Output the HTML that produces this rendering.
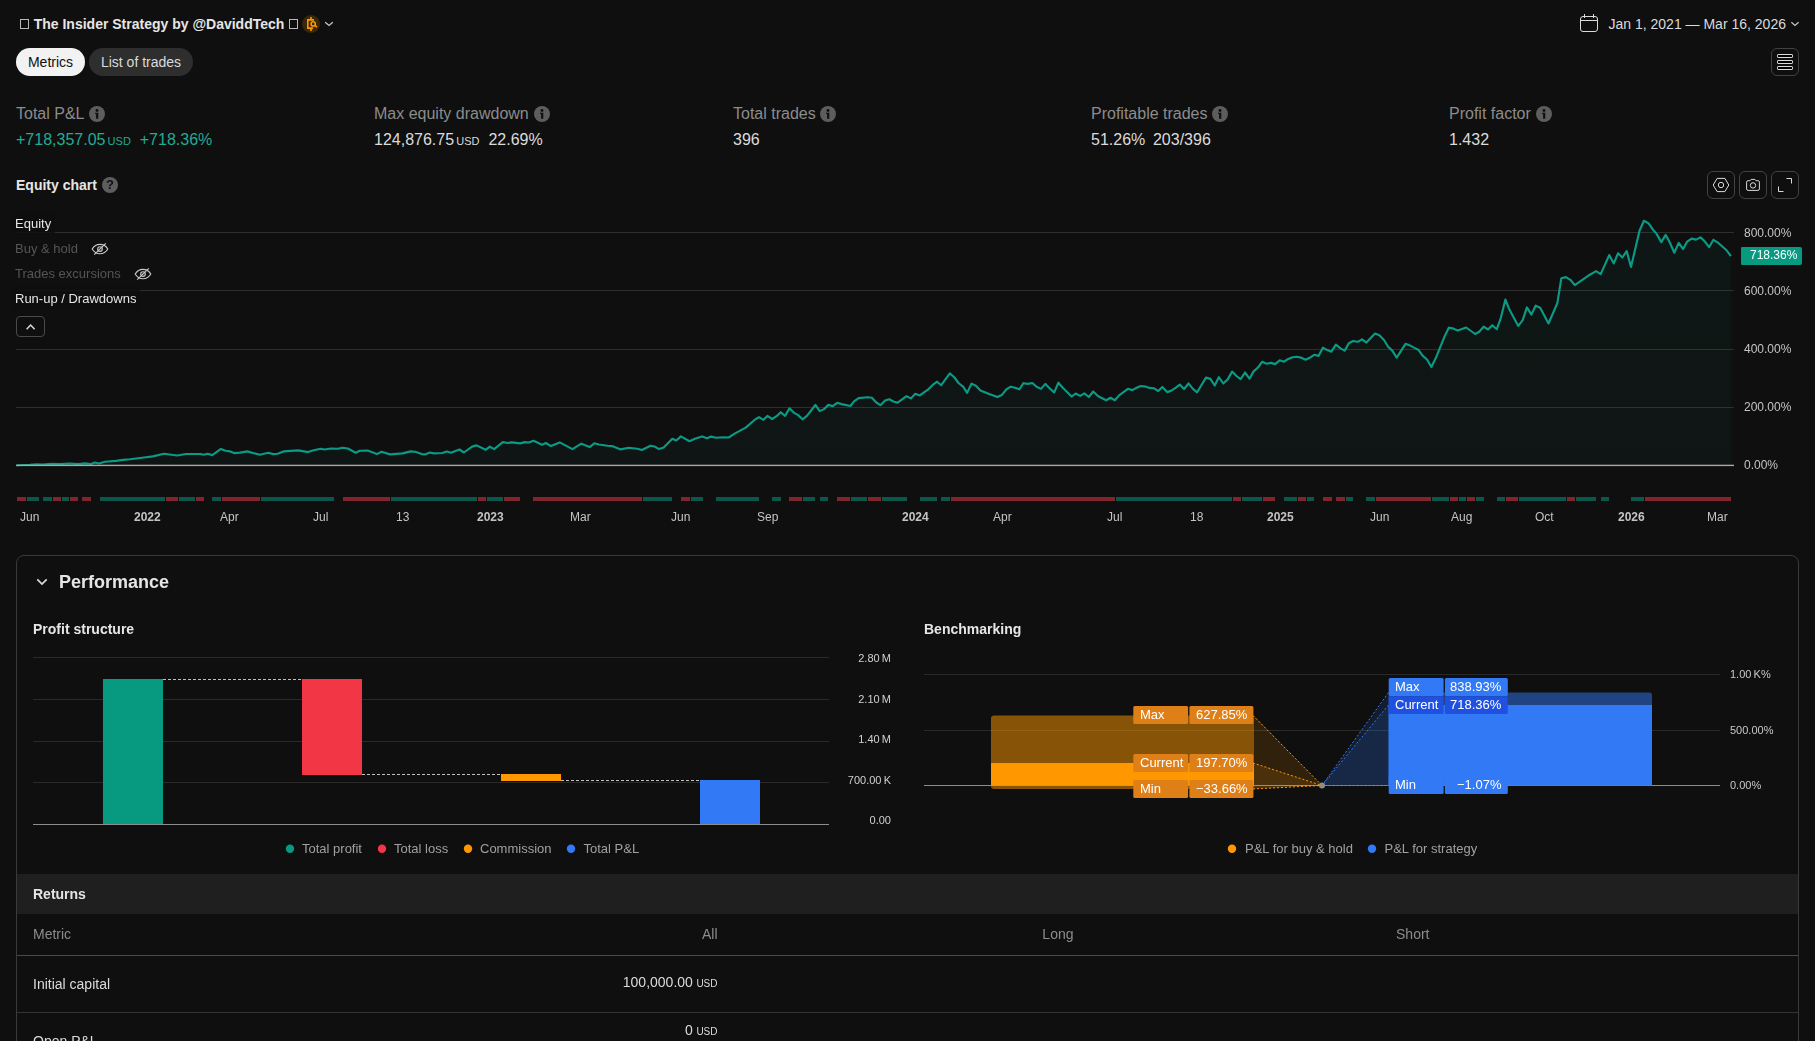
<!DOCTYPE html>
<html><head><meta charset="utf-8"><title>Strategy report</title>
<style>
html,body{margin:0;padding:0;background:#0f0f0f;}
body{width:1815px;height:1041px;overflow:hidden;position:relative;font-family:"Liberation Sans",sans-serif;color:#dbdbdb;}
.t{position:absolute;white-space:nowrap;}
.abs{position:absolute;}
.gs{will-change:transform;}
.tofu{display:inline-block;width:10.8px;height:10px;position:relative;vertical-align:baseline;}
.tofu i{position:absolute;left:1px;top:0px;width:6.6px;height:8px;border:1px solid #b8b8b8;display:block;}
.btn{position:absolute;width:26px;height:26px;border:1px solid #424242;border-radius:6px;}
.btn svg{position:absolute;left:-1px;top:-1px;}
.info{position:absolute;width:16px;height:16px;border-radius:50%;background:#5d5d5d;}
.usd{font-size:11px;}
svg{display:block;overflow:visible;}
</style></head><body>
<div class="t" style="top:17px;font-size:14px;line-height:14px;color:#e6e6e6;font-weight:700;left:19px;"><span class="tofu"><i></i></span> The Insider Strategy by @DaviddTech <span class="tofu"><i></i></span></div>
<svg class="abs" style="left:302px;top:15px" width="18" height="18" viewBox="0 0 18 18"><circle cx="9" cy="9" r="9" fill="#3a2806"/>
<g fill="none" stroke="#ff9800" stroke-width="1.6"><path d="M9 2v2.5M9 13.5V16"/><path d="M12 4.9H5.8v8.2H11"/><circle cx="11.2" cy="8.9" r="2.1"/><path d="M12.8 10.4l2.2 1.7"/></g></svg>
<svg class="abs" style="left:324px;top:20px" width="10" height="8" viewBox="0 0 10 8"><path d="M1.2 2.3L5 5.5 8.8 2.3" fill="none" stroke="#c8c8c8" stroke-width="1.3"/></svg>
<svg class="abs" style="left:1579px;top:13px" width="20" height="20" viewBox="0 0 20 20"><g fill="none" stroke="#dbdbdb" stroke-width="1"><rect x="1.5" y="3.5" width="17" height="15" rx="2.5"/><path d="M1.5 7.5h17M5.5 1v4M14.5 1v4"/></g></svg>
<div class="t" style="top:17px;font-size:14px;line-height:14px;color:#dbdbdb;left:1608.5px;">Jan 1, 2021 — Mar 16, 2026</div>
<svg class="abs" style="left:1790px;top:20px" width="10" height="8" viewBox="0 0 10 8"><path d="M1.4 2.3L5 5.4 8.6 2.3" fill="none" stroke="#c8c8c8" stroke-width="1.2"/></svg>
<div class="abs" style="left:16px;top:48px;width:69px;height:28px;border-radius:14px;background:#f2f2f2"></div>
<div class="t" style="top:55px;font-size:14px;line-height:14px;color:#0f0f0f;left:-99.5px;width:300px;text-align:center;">Metrics</div>
<div class="abs" style="left:89px;top:48px;width:104px;height:28px;border-radius:14px;background:#2e2e2e"></div>
<div class="t" style="top:55px;font-size:14px;line-height:14px;color:#dbdbdb;left:-9px;width:300px;text-align:center;">List of trades</div>
<div class="btn" style="left:1771px;top:48px"><svg width="28" height="28" viewBox="0 0 28 28"><g fill="#000" stroke="#dbdbdb" stroke-width="1"><rect x="6.5" y="6.5" width="15" height="3" rx="0.6"/><rect x="6.5" y="12.5" width="15" height="3" rx="0.6"/><rect x="6.5" y="18.5" width="15" height="3" rx="0.6"/></g></svg></div>
<div class="t" style="top:106px;font-size:16px;line-height:16px;color:#8c8c8c;left:16px;">Total P&amp;L</div>
<div class="t" style="top:106px;font-size:16px;line-height:16px;color:#8c8c8c;left:374px;">Max equity drawdown</div>
<div class="t" style="top:106px;font-size:16px;line-height:16px;color:#8c8c8c;left:733px;">Total trades</div>
<div class="t" style="top:106px;font-size:16px;line-height:16px;color:#8c8c8c;left:1091px;">Profitable trades</div>
<div class="t" style="top:106px;font-size:16px;line-height:16px;color:#8c8c8c;left:1449px;">Profit factor</div>
<div class="info" style="left:89px;top:106px"></div>
<svg class="abs" style="left:89px;top:106px" width="16" height="16" viewBox="0 0 16 16"><g fill="#0f0f0f"><circle cx="8" cy="4.5" r="1.45"/><path d="M6.1 6.8h3.2v5.9H7.1V8.1H6.1z"/></g></svg>
<div class="info" style="left:534px;top:106px"></div>
<svg class="abs" style="left:534px;top:106px" width="16" height="16" viewBox="0 0 16 16"><g fill="#0f0f0f"><circle cx="8" cy="4.5" r="1.45"/><path d="M6.1 6.8h3.2v5.9H7.1V8.1H6.1z"/></g></svg>
<div class="info" style="left:820px;top:106px"></div>
<svg class="abs" style="left:820px;top:106px" width="16" height="16" viewBox="0 0 16 16"><g fill="#0f0f0f"><circle cx="8" cy="4.5" r="1.45"/><path d="M6.1 6.8h3.2v5.9H7.1V8.1H6.1z"/></g></svg>
<div class="info" style="left:1212px;top:106px"></div>
<svg class="abs" style="left:1212px;top:106px" width="16" height="16" viewBox="0 0 16 16"><g fill="#0f0f0f"><circle cx="8" cy="4.5" r="1.45"/><path d="M6.1 6.8h3.2v5.9H7.1V8.1H6.1z"/></g></svg>
<div class="info" style="left:1536px;top:106px"></div>
<svg class="abs" style="left:1536px;top:106px" width="16" height="16" viewBox="0 0 16 16"><g fill="#0f0f0f"><circle cx="8" cy="4.5" r="1.45"/><path d="M6.1 6.8h3.2v5.9H7.1V8.1H6.1z"/></g></svg>
<div class="t" style="top:132px;font-size:16px;line-height:16px;color:#22ab94;left:16px;">+718,357.05<span class="usd">&#8201;USD</span>&nbsp;&nbsp;+718.36%</div>
<div class="t" style="top:132px;font-size:16px;line-height:16px;color:#dbdbdb;left:374px;">124,876.75<span class="usd">&#8201;USD</span>&nbsp;&nbsp;22.69%</div>
<div class="t" style="top:132px;font-size:16px;line-height:16px;color:#dbdbdb;left:733px;">396</div>
<div class="t" style="top:132px;font-size:16px;line-height:16px;color:#dbdbdb;left:1091px;">51.26%<span style="margin-left:7.7px">203/396</span></div>
<div class="t" style="top:132px;font-size:16px;line-height:16px;color:#dbdbdb;left:1449px;">1.432</div>
<div class="t" style="top:178px;font-size:14px;line-height:14px;color:#e6e6e6;font-weight:700;left:16px;">Equity chart</div>
<div class="info" style="left:102px;top:177px"></div>
<div class="t gs" style="left:102px;top:177px;width:16px;height:16px;text-align:center;font-size:13px;line-height:16px;font-weight:700;color:#0f0f0f">?</div>
<div class="btn" style="left:1707px;top:171px"><svg width="28" height="28" viewBox="0 0 28 28"><g fill="none" stroke="#dbdbdb" stroke-width="1"><path d="M6.2 14l3.9-6.6h7.8l3.9 6.6-3.9 6.6h-7.8z"/><circle cx="14" cy="14" r="2.7"/></g></svg></div>
<div class="btn" style="left:1739px;top:171px"><svg width="28" height="28" viewBox="0 0 28 28"><g fill="none" stroke="#dbdbdb" stroke-width="1"><path d="M9.1 9.7h2l1-1.3h3.8l1 1.3h2a1.5 1.5 0 0 1 1.5 1.5v6.7a1.5 1.5 0 0 1-1.5 1.5H9.1a1.5 1.5 0 0 1-1.5-1.5v-6.7a1.5 1.5 0 0 1 1.5-1.5z"/><circle cx="14" cy="14.4" r="2.7"/></g></svg></div>
<div class="btn" style="left:1771px;top:171px"><svg width="28" height="28" viewBox="0 0 28 28"><g fill="none" stroke="#dbdbdb" stroke-width="1"><path d="M15.5 7.5h5v5M7.5 15.5v5h5"/></g></svg></div>
<svg class="abs" style="left:0;top:0" width="1815" height="560" viewBox="0 0 1815 560"><defs><linearGradient id="eg" x1="0" y1="0" x2="0" y2="1"><stop offset="0" stop-color="#089981" stop-opacity="0.06"/><stop offset="1" stop-color="#089981" stop-opacity="0.045"/></linearGradient></defs><rect x="16" y="232" width="1718" height="1" fill="#2e2e2e"/><rect x="16" y="290" width="1718" height="1" fill="#2e2e2e"/><rect x="16" y="349" width="1718" height="1" fill="#2e2e2e"/><rect x="16" y="407" width="1718" height="1" fill="#2e2e2e"/><path d="M16.6 465.3 L30.0 464.8 L36.4 464.3 L43.0 464.5 L51.6 463.7 L60.0 464.1 L69.5 463.5 L78.0 464.1 L85.0 463.4 L91.0 464.0 L95.0 462.5 L99.0 463.5 L105.0 461.8 L116.0 460.9 L123.0 459.9 L130.0 459.3 L142.2 457.8 L152.8 456.4 L164.0 453.8 L177.3 455.5 L185.9 454.0 L200.4 454.0 L203.7 454.7 L207.7 453.8 L212.3 455.1 L220.9 448.9 L225.5 450.8 L230.2 451.4 L234.1 453.1 L240.0 452.6 L247.3 451.4 L259.8 454.8 L268.4 452.8 L273.0 454.1 L277.7 453.7 L283.6 451.4 L298.2 450.4 L308.1 452.1 L312.7 450.5 L320.7 448.8 L324.6 449.5 L331.2 448.5 L337.9 448.8 L342.5 447.7 L347.8 448.5 L355.7 452.8 L359.7 450.8 L367.6 450.5 L376.9 454.1 L381.5 451.8 L390.1 454.4 L402.6 453.4 L410.6 451.4 L415.2 451.8 L421.8 454.1 L425.1 454.4 L429.8 452.5 L433.7 453.4 L442.3 453.0 L446.9 451.4 L450.9 452.8 L459.5 449.5 L463.9 452.5 L472.1 446.6 L476.6 445.4 L485.6 449.8 L489.8 446.7 L494.2 449.1 L502.8 442.1 L507.7 443.0 L511.7 442.4 L520.2 443.4 L524.9 442.1 L528.8 442.5 L533.5 440.8 L542.1 444.8 L546.0 443.0 L550.9 446.1 L559.7 442.4 L572.5 449.1 L581.3 443.7 L589.7 447.1 L594.3 443.3 L598.9 444.5 L607.5 445.8 L612.1 446.1 L620.7 449.4 L628.7 447.8 L637.3 448.7 L641.9 450.0 L650.5 445.7 L654.5 446.5 L659.1 449.1 L663.7 447.4 L672.3 438.8 L676.3 440.5 L680.9 436.4 L689.5 441.2 L694.8 438.8 L702.1 436.4 L707.2 438.3 L711.0 436.6 L716.0 437.7 L723.1 437.2 L728.7 437.5 L734.2 433.9 L745.7 427.6 L755.1 419.5 L759.0 417.1 L763.4 419.8 L767.4 415.9 L772.2 419.0 L776.6 416.2 L780.7 412.2 L785.1 415.9 L789.5 408.3 L793.7 412.6 L798.1 415.1 L802.5 419.3 L806.9 415.9 L815.4 405.0 L819.8 411.1 L824.0 409.1 L828.4 404.9 L832.8 406.1 L837.2 402.8 L841.6 404.1 L850.4 406.0 L854.3 401.1 L858.7 398.1 L867.5 397.2 L871.9 397.8 L876.3 402.5 L880.4 405.2 L885.1 400.5 L889.3 399.2 L893.9 401.8 L897.7 402.6 L906.5 396.2 L910.9 398.4 L915.3 393.8 L919.8 395.4 L928.6 389.1 L933.0 384.7 L937.1 381.7 L941.2 385.2 L949.8 373.4 L954.5 377.5 L958.5 383.0 L963.3 386.9 L967.1 392.9 L971.5 383.6 L975.9 385.8 L980.4 390.5 L989.2 394.0 L997.4 397.1 L1001.8 395.1 L1006.3 389.4 L1010.7 386.7 L1015.1 387.8 L1019.5 389.3 L1023.3 383.2 L1027.7 383.9 L1032.4 383.0 L1036.6 386.7 L1041.0 388.9 L1045.4 383.9 L1049.8 388.5 L1054.2 392.4 L1058.4 382.7 L1063.0 388.0 L1071.6 396.6 L1075.7 393.5 L1080.1 395.9 L1084.4 393.4 L1088.8 397.0 L1093.2 391.5 L1098.2 396.2 L1106.2 400.3 L1110.5 397.8 L1114.9 400.3 L1119.1 395.4 L1127.9 388.8 L1132.3 390.1 L1136.7 387.7 L1140.6 386.0 L1145.6 386.6 L1149.4 387.9 L1153.8 388.2 L1158.2 391.0 L1162.4 387.0 L1167.1 392.1 L1170.9 390.9 L1175.9 387.7 L1179.7 384.6 L1184.1 389.0 L1188.5 383.3 L1192.9 388.8 L1197.1 392.3 L1206.0 377.6 L1210.4 378.9 L1214.7 385.5 L1218.8 377.2 L1223.3 383.5 L1227.7 379.4 L1232.1 371.6 L1236.5 376.0 L1240.6 379.1 L1245.0 372.5 L1249.5 378.7 L1253.6 371.4 L1258.0 367.5 L1262.1 361.8 L1266.6 363.7 L1271.2 362.9 L1275.2 364.1 L1279.7 360.3 L1284.1 361.7 L1288.2 358.9 L1292.6 357.3 L1297.0 356.7 L1300.9 357.6 L1305.5 359.7 L1309.7 357.8 L1314.1 354.8 L1318.5 355.9 L1322.9 347.7 L1327.3 350.1 L1331.4 351.7 L1335.9 344.6 L1340.5 348.4 L1344.7 350.6 L1348.8 343.3 L1353.2 341.0 L1357.8 341.8 L1362.0 339.3 L1366.4 342.6 L1375.0 333.6 L1379.4 335.2 L1384.0 340.0 L1388.1 346.8 L1392.3 350.6 L1396.7 357.6 L1405.5 343.8 L1409.9 345.4 L1414.4 347.9 L1418.4 349.8 L1422.6 355.6 L1427.0 359.5 L1431.4 367.0 L1435.8 358.1 L1444.4 336.9 L1448.8 327.7 L1452.9 328.4 L1457.7 330.6 L1466.2 327.5 L1475.1 334.0 L1479.2 331.8 L1483.7 326.7 L1488.0 329.5 L1492.3 325.2 L1496.8 329.2 L1500.8 318.1 L1505.4 299.5 L1509.4 309.6 L1518.3 325.9 L1522.7 320.2 L1526.9 307.4 L1531.4 314.6 L1535.6 305.7 L1540.2 307.8 L1548.5 323.5 L1557.3 303.3 L1561.3 278.3 L1565.9 277.1 L1570.4 279.8 L1574.8 285.1 L1588.1 275.8 L1596.1 271.1 L1600.7 274.1 L1609.2 255.1 L1613.8 263.4 L1618.0 253.3 L1622.3 257.5 L1626.7 251.1 L1631.0 267.0 L1639.5 230.8 L1643.9 220.8 L1648.6 223.4 L1652.6 229.2 L1656.6 233.9 L1661.3 242.1 L1665.7 234.9 L1669.7 242.3 L1674.3 252.7 L1678.7 242.9 L1683.1 249.0 L1687.2 241.6 L1691.6 238.6 L1696.0 239.6 L1700.5 237.4 L1704.7 241.3 L1709.1 247.2 L1713.4 239.8 L1717.5 242.3 L1726.6 250.3 L1730.9 256.1 L1731 465 L16 465 Z" fill="url(#eg)"/><path d="M16.6 465.3 L30.0 464.8 L36.4 464.3 L43.0 464.5 L51.6 463.7 L60.0 464.1 L69.5 463.5 L78.0 464.1 L85.0 463.4 L91.0 464.0 L95.0 462.5 L99.0 463.5 L105.0 461.8 L116.0 460.9 L123.0 459.9 L130.0 459.3 L142.2 457.8 L152.8 456.4 L164.0 453.8 L177.3 455.5 L185.9 454.0 L200.4 454.0 L203.7 454.7 L207.7 453.8 L212.3 455.1 L220.9 448.9 L225.5 450.8 L230.2 451.4 L234.1 453.1 L240.0 452.6 L247.3 451.4 L259.8 454.8 L268.4 452.8 L273.0 454.1 L277.7 453.7 L283.6 451.4 L298.2 450.4 L308.1 452.1 L312.7 450.5 L320.7 448.8 L324.6 449.5 L331.2 448.5 L337.9 448.8 L342.5 447.7 L347.8 448.5 L355.7 452.8 L359.7 450.8 L367.6 450.5 L376.9 454.1 L381.5 451.8 L390.1 454.4 L402.6 453.4 L410.6 451.4 L415.2 451.8 L421.8 454.1 L425.1 454.4 L429.8 452.5 L433.7 453.4 L442.3 453.0 L446.9 451.4 L450.9 452.8 L459.5 449.5 L463.9 452.5 L472.1 446.6 L476.6 445.4 L485.6 449.8 L489.8 446.7 L494.2 449.1 L502.8 442.1 L507.7 443.0 L511.7 442.4 L520.2 443.4 L524.9 442.1 L528.8 442.5 L533.5 440.8 L542.1 444.8 L546.0 443.0 L550.9 446.1 L559.7 442.4 L572.5 449.1 L581.3 443.7 L589.7 447.1 L594.3 443.3 L598.9 444.5 L607.5 445.8 L612.1 446.1 L620.7 449.4 L628.7 447.8 L637.3 448.7 L641.9 450.0 L650.5 445.7 L654.5 446.5 L659.1 449.1 L663.7 447.4 L672.3 438.8 L676.3 440.5 L680.9 436.4 L689.5 441.2 L694.8 438.8 L702.1 436.4 L707.2 438.3 L711.0 436.6 L716.0 437.7 L723.1 437.2 L728.7 437.5 L734.2 433.9 L745.7 427.6 L755.1 419.5 L759.0 417.1 L763.4 419.8 L767.4 415.9 L772.2 419.0 L776.6 416.2 L780.7 412.2 L785.1 415.9 L789.5 408.3 L793.7 412.6 L798.1 415.1 L802.5 419.3 L806.9 415.9 L815.4 405.0 L819.8 411.1 L824.0 409.1 L828.4 404.9 L832.8 406.1 L837.2 402.8 L841.6 404.1 L850.4 406.0 L854.3 401.1 L858.7 398.1 L867.5 397.2 L871.9 397.8 L876.3 402.5 L880.4 405.2 L885.1 400.5 L889.3 399.2 L893.9 401.8 L897.7 402.6 L906.5 396.2 L910.9 398.4 L915.3 393.8 L919.8 395.4 L928.6 389.1 L933.0 384.7 L937.1 381.7 L941.2 385.2 L949.8 373.4 L954.5 377.5 L958.5 383.0 L963.3 386.9 L967.1 392.9 L971.5 383.6 L975.9 385.8 L980.4 390.5 L989.2 394.0 L997.4 397.1 L1001.8 395.1 L1006.3 389.4 L1010.7 386.7 L1015.1 387.8 L1019.5 389.3 L1023.3 383.2 L1027.7 383.9 L1032.4 383.0 L1036.6 386.7 L1041.0 388.9 L1045.4 383.9 L1049.8 388.5 L1054.2 392.4 L1058.4 382.7 L1063.0 388.0 L1071.6 396.6 L1075.7 393.5 L1080.1 395.9 L1084.4 393.4 L1088.8 397.0 L1093.2 391.5 L1098.2 396.2 L1106.2 400.3 L1110.5 397.8 L1114.9 400.3 L1119.1 395.4 L1127.9 388.8 L1132.3 390.1 L1136.7 387.7 L1140.6 386.0 L1145.6 386.6 L1149.4 387.9 L1153.8 388.2 L1158.2 391.0 L1162.4 387.0 L1167.1 392.1 L1170.9 390.9 L1175.9 387.7 L1179.7 384.6 L1184.1 389.0 L1188.5 383.3 L1192.9 388.8 L1197.1 392.3 L1206.0 377.6 L1210.4 378.9 L1214.7 385.5 L1218.8 377.2 L1223.3 383.5 L1227.7 379.4 L1232.1 371.6 L1236.5 376.0 L1240.6 379.1 L1245.0 372.5 L1249.5 378.7 L1253.6 371.4 L1258.0 367.5 L1262.1 361.8 L1266.6 363.7 L1271.2 362.9 L1275.2 364.1 L1279.7 360.3 L1284.1 361.7 L1288.2 358.9 L1292.6 357.3 L1297.0 356.7 L1300.9 357.6 L1305.5 359.7 L1309.7 357.8 L1314.1 354.8 L1318.5 355.9 L1322.9 347.7 L1327.3 350.1 L1331.4 351.7 L1335.9 344.6 L1340.5 348.4 L1344.7 350.6 L1348.8 343.3 L1353.2 341.0 L1357.8 341.8 L1362.0 339.3 L1366.4 342.6 L1375.0 333.6 L1379.4 335.2 L1384.0 340.0 L1388.1 346.8 L1392.3 350.6 L1396.7 357.6 L1405.5 343.8 L1409.9 345.4 L1414.4 347.9 L1418.4 349.8 L1422.6 355.6 L1427.0 359.5 L1431.4 367.0 L1435.8 358.1 L1444.4 336.9 L1448.8 327.7 L1452.9 328.4 L1457.7 330.6 L1466.2 327.5 L1475.1 334.0 L1479.2 331.8 L1483.7 326.7 L1488.0 329.5 L1492.3 325.2 L1496.8 329.2 L1500.8 318.1 L1505.4 299.5 L1509.4 309.6 L1518.3 325.9 L1522.7 320.2 L1526.9 307.4 L1531.4 314.6 L1535.6 305.7 L1540.2 307.8 L1548.5 323.5 L1557.3 303.3 L1561.3 278.3 L1565.9 277.1 L1570.4 279.8 L1574.8 285.1 L1588.1 275.8 L1596.1 271.1 L1600.7 274.1 L1609.2 255.1 L1613.8 263.4 L1618.0 253.3 L1622.3 257.5 L1626.7 251.1 L1631.0 267.0 L1639.5 230.8 L1643.9 220.8 L1648.6 223.4 L1652.6 229.2 L1656.6 233.9 L1661.3 242.1 L1665.7 234.9 L1669.7 242.3 L1674.3 252.7 L1678.7 242.9 L1683.1 249.0 L1687.2 241.6 L1691.6 238.6 L1696.0 239.6 L1700.5 237.4 L1704.7 241.3 L1709.1 247.2 L1713.4 239.8 L1717.5 242.3 L1726.6 250.3 L1730.9 256.1" fill="none" stroke="#0b9a84" stroke-width="2.15" stroke-linejoin="round" stroke-linecap="butt"/><rect x="16" y="464.7" width="1718" height="1.4" fill="#a8a8a8"/><rect x="17" y="497" width="9" height="4" fill="#83232c"/><rect x="27" y="497" width="12" height="4" fill="#0c574b"/><rect x="43" y="497" width="9" height="4" fill="#0c574b"/><rect x="53" y="497" width="8" height="4" fill="#83232c"/><rect x="62" y="497" width="7" height="4" fill="#0c574b"/><rect x="70" y="497" width="8" height="4" fill="#83232c"/><rect x="82" y="497" width="9" height="4" fill="#83232c"/><rect x="100" y="497" width="65" height="4" fill="#0c574b"/><rect x="166" y="497" width="12" height="4" fill="#83232c"/><rect x="179" y="497" width="16" height="4" fill="#0c574b"/><rect x="196" y="497" width="8" height="4" fill="#83232c"/><rect x="212" y="497" width="9" height="4" fill="#0c574b"/><rect x="222" y="497" width="38" height="4" fill="#83232c"/><rect x="261" y="497" width="73" height="4" fill="#0c574b"/><rect x="343" y="497" width="47" height="4" fill="#83232c"/><rect x="391" y="497" width="86" height="4" fill="#0c574b"/><rect x="478" y="497" width="8" height="4" fill="#83232c"/><rect x="487" y="497" width="16" height="4" fill="#0c574b"/><rect x="504" y="497" width="16" height="4" fill="#83232c"/><rect x="533" y="497" width="109" height="4" fill="#83232c"/><rect x="643" y="497" width="29" height="4" fill="#0c574b"/><rect x="681" y="497" width="9" height="4" fill="#83232c"/><rect x="691" y="497" width="12" height="4" fill="#0c574b"/><rect x="716" y="497" width="43" height="4" fill="#0c574b"/><rect x="772" y="497" width="9" height="4" fill="#0c574b"/><rect x="789" y="497" width="13" height="4" fill="#83232c"/><rect x="803" y="497" width="12" height="4" fill="#0c574b"/><rect x="820" y="497" width="8" height="4" fill="#0c574b"/><rect x="837" y="497" width="13" height="4" fill="#83232c"/><rect x="851" y="497" width="16" height="4" fill="#0c574b"/><rect x="868" y="497" width="13" height="4" fill="#83232c"/><rect x="882" y="497" width="25" height="4" fill="#0c574b"/><rect x="920" y="497" width="17" height="4" fill="#0c574b"/><rect x="941" y="497" width="9" height="4" fill="#0c574b"/><rect x="951" y="497" width="164" height="4" fill="#83232c"/><rect x="1116" y="497" width="116" height="4" fill="#0c574b"/><rect x="1233" y="497" width="8" height="4" fill="#83232c"/><rect x="1242" y="497" width="20" height="4" fill="#0c574b"/><rect x="1263" y="497" width="12" height="4" fill="#83232c"/><rect x="1284" y="497" width="13" height="4" fill="#0c574b"/><rect x="1298" y="497" width="8" height="4" fill="#83232c"/><rect x="1307" y="497" width="7" height="4" fill="#0c574b"/><rect x="1323" y="497" width="9" height="4" fill="#83232c"/><rect x="1336" y="497" width="9" height="4" fill="#83232c"/><rect x="1346" y="497" width="7" height="4" fill="#0c574b"/><rect x="1366" y="497" width="9" height="4" fill="#0c574b"/><rect x="1376" y="497" width="55" height="4" fill="#83232c"/><rect x="1432" y="497" width="17" height="4" fill="#0c574b"/><rect x="1450" y="497" width="8" height="4" fill="#83232c"/><rect x="1459" y="497" width="7" height="4" fill="#0c574b"/><rect x="1467" y="497" width="8" height="4" fill="#83232c"/><rect x="1476" y="497" width="8" height="4" fill="#0c574b"/><rect x="1497" y="497" width="8" height="4" fill="#0c574b"/><rect x="1506" y="497" width="12" height="4" fill="#83232c"/><rect x="1519" y="497" width="47" height="4" fill="#0c574b"/><rect x="1567" y="497" width="8" height="4" fill="#83232c"/><rect x="1576" y="497" width="20" height="4" fill="#0c574b"/><rect x="1601" y="497" width="8" height="4" fill="#0c574b"/><rect x="1631" y="497" width="13" height="4" fill="#0c574b"/><rect x="1645" y="497" width="86" height="4" fill="#83232c"/></svg>
<div class="t gs" style="top:227px;font-size:12px;line-height:12px;color:#c4c4c4;left:1744px;">800.00%</div>
<div class="t gs" style="top:285px;font-size:12px;line-height:12px;color:#c4c4c4;left:1744px;">600.00%</div>
<div class="t gs" style="top:343px;font-size:12px;line-height:12px;color:#c4c4c4;left:1744px;">400.00%</div>
<div class="t gs" style="top:401px;font-size:12px;line-height:12px;color:#c4c4c4;left:1744px;">200.00%</div>
<div class="t gs" style="top:459px;font-size:12px;line-height:12px;color:#c4c4c4;left:1744px;">0.00%</div>
<div class="abs" style="left:1741px;top:247px;width:61px;height:18px;border-radius:1px 2px 2px 1px;background:#089981"></div>
<div class="t gs" style="top:249px;font-size:12px;line-height:12px;color:#ffffff;left:1750px;">718.36%</div>
<div class="t gs" style="top:511px;font-size:12px;line-height:12px;color:#c4c4c4;left:20px;">Jun</div>
<div class="t gs" style="top:511px;font-size:12px;line-height:12px;color:#c4c4c4;font-weight:700;left:134px;">2022</div>
<div class="t gs" style="top:511px;font-size:12px;line-height:12px;color:#c4c4c4;left:220px;">Apr</div>
<div class="t gs" style="top:511px;font-size:12px;line-height:12px;color:#c4c4c4;left:313px;">Jul</div>
<div class="t gs" style="top:511px;font-size:12px;line-height:12px;color:#c4c4c4;left:396px;">13</div>
<div class="t gs" style="top:511px;font-size:12px;line-height:12px;color:#c4c4c4;font-weight:700;left:477px;">2023</div>
<div class="t gs" style="top:511px;font-size:12px;line-height:12px;color:#c4c4c4;left:570px;">Mar</div>
<div class="t gs" style="top:511px;font-size:12px;line-height:12px;color:#c4c4c4;left:671px;">Jun</div>
<div class="t gs" style="top:511px;font-size:12px;line-height:12px;color:#c4c4c4;left:757px;">Sep</div>
<div class="t gs" style="top:511px;font-size:12px;line-height:12px;color:#c4c4c4;font-weight:700;left:902px;">2024</div>
<div class="t gs" style="top:511px;font-size:12px;line-height:12px;color:#c4c4c4;left:993px;">Apr</div>
<div class="t gs" style="top:511px;font-size:12px;line-height:12px;color:#c4c4c4;left:1107px;">Jul</div>
<div class="t gs" style="top:511px;font-size:12px;line-height:12px;color:#c4c4c4;left:1190px;">18</div>
<div class="t gs" style="top:511px;font-size:12px;line-height:12px;color:#c4c4c4;font-weight:700;left:1267px;">2025</div>
<div class="t gs" style="top:511px;font-size:12px;line-height:12px;color:#c4c4c4;left:1370px;">Jun</div>
<div class="t gs" style="top:511px;font-size:12px;line-height:12px;color:#c4c4c4;left:1451px;">Aug</div>
<div class="t gs" style="top:511px;font-size:12px;line-height:12px;color:#c4c4c4;left:1535px;">Oct</div>
<div class="t gs" style="top:511px;font-size:12px;line-height:12px;color:#c4c4c4;font-weight:700;left:1618px;">2026</div>
<div class="t gs" style="top:511px;font-size:12px;line-height:12px;color:#c4c4c4;left:1707px;">Mar</div>
<div class="abs" style="left:11px;top:212px;width:44px;height:24px;background:rgba(15,15,15,0.82)"></div>
<div class="abs" style="left:11px;top:286px;width:129px;height:24px;background:rgba(15,15,15,0.82)"></div>
<div class="t" style="top:217px;font-size:13px;line-height:13px;color:#e6e6e6;left:15px;">Equity</div>
<div class="t" style="top:242px;font-size:13px;line-height:13px;color:#555555;left:15px;">Buy &amp; hold</div>
<div class="t" style="top:267px;font-size:13px;line-height:13px;color:#555555;left:15px;">Trades excursions</div>
<div class="t" style="top:292px;font-size:13px;line-height:13px;color:#e6e6e6;left:15px;">Run-up / Drawdowns</div>
<svg class="abs" style="left:91.1px;top:242px" width="18" height="14" viewBox="0 0 18 14"><g fill="none" stroke="#c8c8c8" stroke-width="1.15"><path d="M1.2 7C3 3.9 5.8 2.3 9 2.3S15 3.9 16.8 7C15 10.1 12.2 11.7 9 11.7S3 10.1 1.2 7z"/><circle cx="9" cy="7" r="2.3"/><path d="M3.2 12.6L14.8 1.4"/></g></svg>
<svg class="abs" style="left:134px;top:266.8px" width="18" height="14" viewBox="0 0 18 14"><g fill="none" stroke="#c8c8c8" stroke-width="1.15"><path d="M1.2 7C3 3.9 5.8 2.3 9 2.3S15 3.9 16.8 7C15 10.1 12.2 11.7 9 11.7S3 10.1 1.2 7z"/><circle cx="9" cy="7" r="2.3"/><path d="M3.2 12.6L14.8 1.4"/></g></svg>
<div class="abs" style="left:16px;top:316px;width:27px;height:19px;border:1px solid #4a4a4a;border-radius:4px"><svg width="27" height="19" viewBox="0 0 27 19"><path d="M9.6 12.2L13.6 8.1l4 4.1" fill="none" stroke="#dbdbdb" stroke-width="1.5"/></svg></div>
<div class="abs" style="left:16px;top:555px;width:1781px;height:520px;border:1px solid #3a3a3a;border-radius:8px"></div>
<svg class="abs" style="left:36px;top:576px" width="12" height="12" viewBox="0 0 12 12"><path d="M1.3 3.4L6 8.1l4.7-4.7" fill="none" stroke="#dbdbdb" stroke-width="1.7"/></svg>
<div class="t" style="top:573px;font-size:18px;line-height:18px;color:#e6e6e6;font-weight:700;left:59px;">Performance</div>
<div class="t" style="top:622px;font-size:14px;line-height:14px;color:#e6e6e6;font-weight:700;left:33px;">Profit structure</div>
<div class="t" style="top:622px;font-size:14px;line-height:14px;color:#e6e6e6;font-weight:700;left:924px;">Benchmarking</div>
<svg class="abs" style="left:0;top:640px" width="1815" height="230" viewBox="0 640 1815 230"><rect x="33" y="657" width="796" height="1" fill="#2a2a2a"/><rect x="33" y="699" width="796" height="1" fill="#2a2a2a"/><rect x="33" y="741" width="796" height="1" fill="#2a2a2a"/><rect x="33" y="782" width="796" height="1" fill="#2a2a2a"/><rect x="33" y="824" width="796" height="1" fill="#8c8c8c"/><rect x="103" y="679" width="60" height="145" fill="#089981"/><rect x="302" y="679" width="60" height="96" fill="#f23645"/><rect x="501" y="774" width="60" height="7" fill="#ff9800"/><rect x="700" y="780" width="60" height="44" fill="#3179f5"/><g stroke="#c0c0c0" stroke-width="1" stroke-dasharray="3 2" fill="none"><path d="M163 679.5H302M362 774.5H501M561 780.5H700"/></g><circle cx="290" cy="848.8" r="4.2" fill="#089981"/><circle cx="382" cy="848.8" r="4.2" fill="#f23645"/><circle cx="468" cy="848.8" r="4.2" fill="#ff9800"/><circle cx="571" cy="848.8" r="4.2" fill="#3179f5"/><circle cx="1232" cy="848.8" r="4.2" fill="#ff9800"/><circle cx="1372" cy="848.8" r="4.2" fill="#3179f5"/><rect x="924" y="674" width="796" height="1" fill="#2a2a2a"/><rect x="924" y="730" width="796" height="1" fill="#2a2a2a"/><rect x="924" y="785" width="796" height="1" fill="#8c8c8c"/><path d="M1254 715.5L1322 785.5 1254 789z" fill="#ff9800" fill-opacity="0.14"/><path d="M1254 763L1322 785.5 1254 789z" fill="#ff9800" fill-opacity="0.13"/><rect x="991" y="715.5" width="263" height="73.5" rx="3" fill="#ff9800" fill-opacity="0.5"/><rect x="991" y="763" width="263" height="22.5" fill="#ff9800"/><g stroke="#ff9800" stroke-width="1" stroke-dasharray="2 2" fill="none"><path d="M1253 715.5L1322 785.5M1253 763L1322 785.5M1253 789L1322 785.5"/></g><path d="M1388.5 692.5L1322 785.5H1388.5z" fill="#3179f5" fill-opacity="0.13"/><path d="M1388.5 705L1322 785.5H1388.5z" fill="#3179f5" fill-opacity="0.12"/><g stroke="#3179f5" stroke-width="1" stroke-dasharray="2 2" fill="none"><path d="M1388.5 692.5L1322 785.5M1388.5 705L1322 785.5M1388.5 785.5H1322"/></g><path d="M1388.5 785.5V695.5a3 3 0 0 1 3-3H1649a3 3 0 0 1 3 3V785.5z" fill="#3179f5" fill-opacity="0.5"/><rect x="1388.5" y="705" width="263.5" height="80.5" fill="#3179f5"/><circle cx="1322" cy="785.5" r="3" fill="#8c8c8c"/><rect x="1133.3" y="706" width="54.8" height="18" rx="1.5" fill="#df7f17"/><rect x="1189.3999999999999" y="706" width="64" height="18" rx="1.5" fill="#df7f17"/><rect x="1133.3" y="754" width="54.8" height="18" rx="1.5" fill="#df7f17"/><rect x="1189.3999999999999" y="754" width="64" height="18" rx="1.5" fill="#df7f17"/><rect x="1133.3" y="780" width="54.8" height="18" rx="1.5" fill="#df7f17"/><rect x="1189.3999999999999" y="780" width="64" height="18" rx="1.5" fill="#df7f17"/><rect x="1388.7" y="678" width="54.9" height="18" rx="1.5" fill="#3179f5"/><rect x="1444.9" y="678" width="62.9" height="18" rx="1.5" fill="#3179f5"/><rect x="1388.7" y="696.2" width="54.9" height="17.7" rx="1.5" fill="#2050e0"/><rect x="1444.9" y="696.2" width="62.9" height="17.7" rx="1.5" fill="#2050e0"/><rect x="1388.7" y="776.1" width="54.9" height="18" rx="1.5" fill="#3179f5"/><rect x="1444.9" y="776.1" width="62.9" height="18" rx="1.5" fill="#3179f5"/></svg>
<div class="t" style="top:653px;font-size:11px;line-height:11px;color:#d0d0d0;right:924px;">2.80&#8201;M</div>
<div class="t" style="top:694px;font-size:11px;line-height:11px;color:#d0d0d0;right:924px;">2.10&#8201;M</div>
<div class="t" style="top:734px;font-size:11px;line-height:11px;color:#d0d0d0;right:924px;">1.40&#8201;M</div>
<div class="t" style="top:775px;font-size:11px;line-height:11px;color:#d0d0d0;right:924px;">700.00&#8201;K</div>
<div class="t" style="top:815px;font-size:11px;line-height:11px;color:#d0d0d0;right:924px;">0.00</div>
<div class="t gs" style="top:669px;font-size:11px;line-height:11px;color:#c8c8c8;left:1730px;">1.00&#8201;K%</div>
<div class="t gs" style="top:725px;font-size:11px;line-height:11px;color:#c8c8c8;left:1730px;">500.00%</div>
<div class="t gs" style="top:780px;font-size:11px;line-height:11px;color:#c8c8c8;left:1730px;">0.00%</div>
<div class="t" style="top:842px;font-size:13px;line-height:13px;color:#a0a0a0;left:302px;">Total profit</div>
<div class="t" style="top:842px;font-size:13px;line-height:13px;color:#a0a0a0;left:394px;">Total loss</div>
<div class="t" style="top:842px;font-size:13px;line-height:13px;color:#a0a0a0;left:480px;">Commission</div>
<div class="t" style="top:842px;font-size:13px;line-height:13px;color:#a0a0a0;left:583.5px;">Total P&amp;L</div>
<div class="t" style="top:842px;font-size:13px;line-height:13px;color:#a0a0a0;left:1245px;">P&amp;L for buy &amp; hold</div>
<div class="t" style="top:842px;font-size:13px;line-height:13px;color:#a0a0a0;left:1384.5px;">P&amp;L for strategy</div>
<div class="t gs" style="top:708px;font-size:13px;line-height:13px;color:#ffffff;left:1139.5px;">Max</div>
<div class="t gs" style="top:708px;font-size:13px;line-height:13px;color:#ffffff;right:567.5px;">627.85%</div>
<div class="t gs" style="top:756px;font-size:13px;line-height:13px;color:#ffffff;left:1139.5px;">Current</div>
<div class="t gs" style="top:756px;font-size:13px;line-height:13px;color:#ffffff;right:567.5px;">197.70%</div>
<div class="t gs" style="top:782px;font-size:13px;line-height:13px;color:#ffffff;left:1139.5px;">Min</div>
<div class="t gs" style="top:782px;font-size:13px;line-height:13px;color:#ffffff;right:567.5px;">−33.66%</div>
<div class="t gs" style="top:680px;font-size:13px;line-height:13px;color:#ffffff;left:1394.5px;">Max</div>
<div class="t gs" style="top:680px;font-size:13px;line-height:13px;color:#ffffff;right:313.5px;">838.93%</div>
<div class="t gs" style="top:698px;font-size:13px;line-height:13px;color:#ffffff;left:1394.5px;">Current</div>
<div class="t gs" style="top:698px;font-size:13px;line-height:13px;color:#ffffff;right:313.5px;">718.36%</div>
<div class="t gs" style="top:778px;font-size:13px;line-height:13px;color:#ffffff;left:1394.5px;">Min</div>
<div class="t gs" style="top:778px;font-size:13px;line-height:13px;color:#ffffff;right:313.5px;">−1.07%</div>
<div class="abs" style="left:17px;top:874px;width:1781px;height:40px;background:#1f1f1f"></div>
<div class="t" style="top:887px;font-size:14px;line-height:14px;color:#e6e6e6;font-weight:700;left:33px;">Returns</div>
<div class="t" style="top:927px;font-size:14px;line-height:14px;color:#8c8c8c;left:33px;">Metric</div>
<div class="t" style="top:927px;font-size:14px;line-height:14px;color:#8c8c8c;right:1097.5px;">All</div>
<div class="t" style="top:927px;font-size:14px;line-height:14px;color:#8c8c8c;right:741.5px;">Long</div>
<div class="t" style="top:927px;font-size:14px;line-height:14px;color:#8c8c8c;right:385.5px;">Short</div>
<div class="abs" style="left:17px;top:955px;width:1781px;height:1px;background:#4a4a4a"></div>
<div class="t" style="top:977px;font-size:14px;line-height:14px;color:#dbdbdb;left:33px;">Initial capital</div>
<div class="t" style="top:975px;font-size:14px;line-height:14px;color:#dbdbdb;right:1097.5px;">100,000.00<span style="font-size:10px;margin-left:1.5px">&#8201;USD</span></div>
<div class="abs" style="left:17px;top:1012px;width:1781px;height:1px;background:#333333"></div>
<div class="t" style="top:1023px;font-size:14px;line-height:14px;color:#dbdbdb;right:1097.5px;">0<span style="font-size:10px;margin-left:1.5px">&#8201;USD</span></div>
<div class="t" style="top:1034px;font-size:14px;line-height:14px;color:#dbdbdb;left:33px;">Open P&amp;L</div>
</body></html>
